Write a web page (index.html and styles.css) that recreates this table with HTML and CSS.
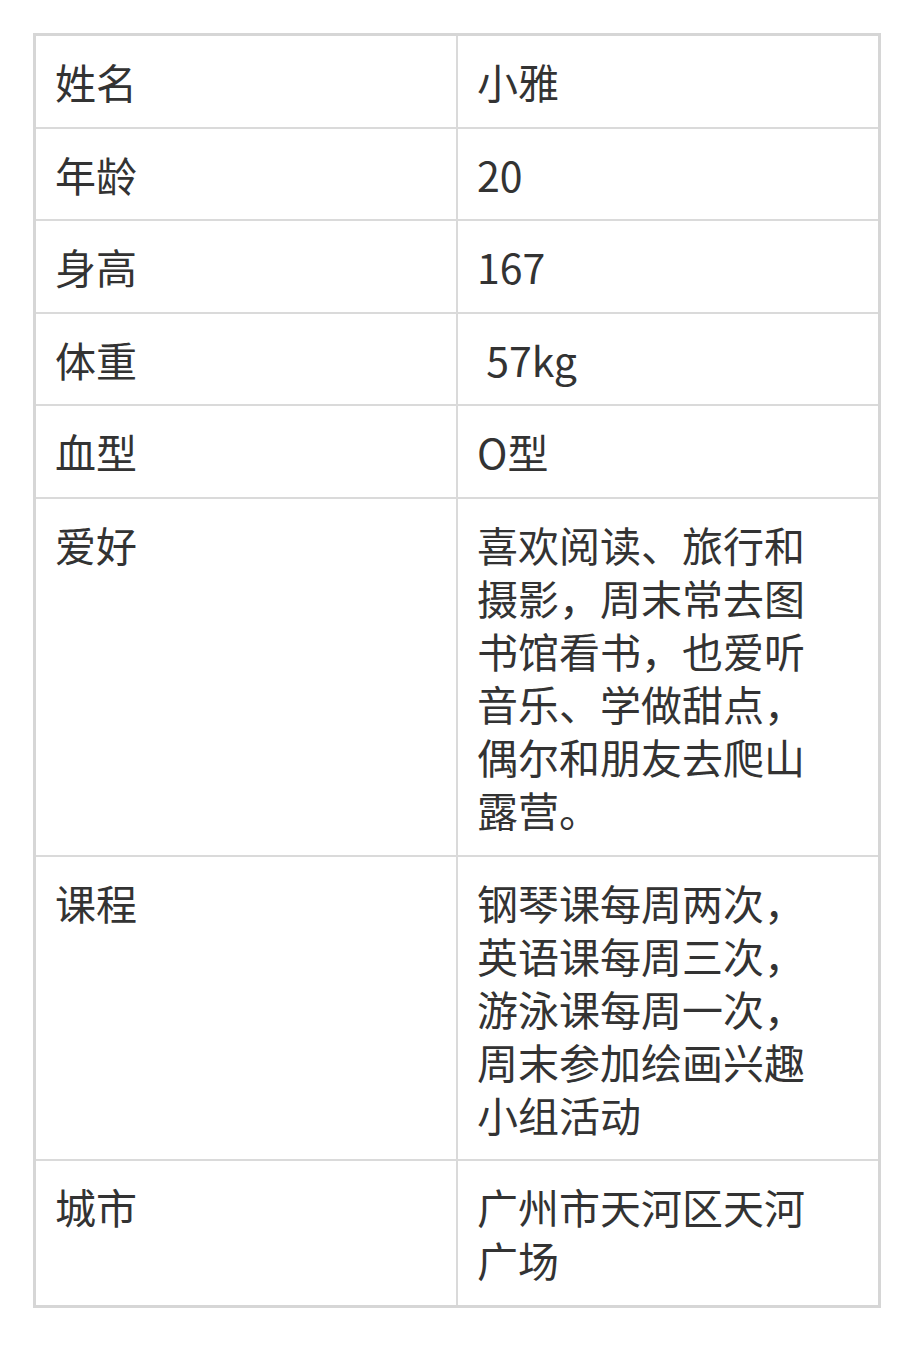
FILE: index.html
```html
<!DOCTYPE html>
<html lang="zh-CN">
<head>
<meta charset="utf-8">
<title>资料表</title>
<link rel="stylesheet" href="styles.css">
</head>
<body>
<table class="info">
  <colgroup><col class="c1"><col class="c2"></colgroup>
  <tr><td>姓名</td><td>小雅</td></tr>
  <tr><td>年龄</td><td>20</td></tr>
  <tr><td>身高</td><td>167</td></tr>
  <tr><td>体重</td><td>&nbsp;57kg</td></tr>
  <tr><td>血型</td><td>O型</td></tr>
  <tr><td>爱好</td><td>喜欢阅读、旅行和摄影，周末常去图书馆看书，也爱听音乐、学做甜点，偶尔和朋友去爬山露营。</td></tr>
  <tr><td>课程</td><td>钢琴课每周两次，英语课每周三次，游泳课每周一次，周末参加绘画兴趣小组活动</td></tr>
  <tr><td>城市</td><td>广州市天河区天河广场</td></tr>
</table>
</body>
</html>
```

FILE: styles.css
```css
html, body {
  margin: 0;
  padding: 0;
  background: #ffffff;
}
body {
  padding: 33px 0 0 33px;
  font-family: "Noto Sans CJK SC", "Noto Sans", sans-serif;
  color: #333333;
}
.info {
  width: 848px;
  border-collapse: collapse;
  table-layout: fixed;
  border: 3px solid #d6d6d6;
}
.info .c1,
.info .c2 {
  width: 50%;
}
.info td {
  border: 2px solid #dadada;
  padding: 19px 40px 18.6px 19px;
  font-size: 41px;
  line-height: 53px;
  vertical-align: top;
  word-break: break-all;
}
```
